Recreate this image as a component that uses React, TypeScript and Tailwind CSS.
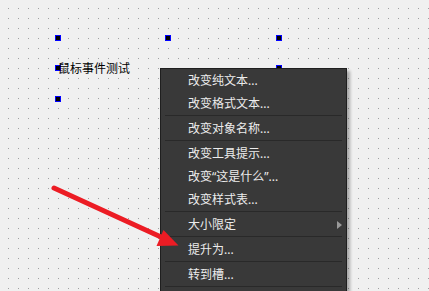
const items: { label?: string; sep?: boolean; sub?: boolean }[] = [
  { label: '改变纯文本...' },
  { label: '改变格式文本...' },
  { sep: true },
  { label: '改变对象名称...' },
  { sep: true },
  { label: '改变工具提示...' },
  { label: '改变“这是什么”...' },
  { label: '改变样式表...' },
  { sep: true },
  { label: '大小限定', sub: true },
  { sep: true },
  { label: '提升为...' },
  { sep: true },
  { label: '转到槽...' },
  { sep: true },
  { label: '' },
]

const handles = [
  [55, 35], [165, 35], [276, 35],
  [55, 65], [276, 65],
  [55, 96], [165, 96], [276, 96],
]

function Handle({ x, y }: { x: number; y: number }) {
  return (
    <div
      className="absolute w-[6px] h-[6px] border border-[#0000ff] bg-black"
      style={{ left: x, top: y }}
    />
  )
}

function ContextMenu() {
  return (
    <div className="absolute left-[160px] top-[68px] w-[187px] border border-[#1f1f1f] bg-[#393939] shadow-[3px_3px_3px_rgba(0,0,0,0.3)]">
      {items.map((it, i) =>
        it.sep ? (
          <div key={i} className="h-[2px]">
            <div className="mx-[4px] h-px bg-[#292929]" />
          </div>
        ) : (
          <div key={i} className="relative h-[23px] flex items-center pl-[27px] text-[12px] leading-none text-[#ececec]">
            {it.label}
            {it.sub && (
              <svg className="absolute left-[176px] top-[8px]" width="6" height="8" viewBox="0 0 6 8">
                <path d="M0 0 L5 4 L0 8 Z" fill="#9a9a9a" />
              </svg>
            )}
          </div>
        ),
      )}
    </div>
  )
}

export default function App() {
  return (
    <div
      className="relative w-[429px] h-[291px] overflow-hidden bg-[#f0f0f0]"
      style={{ fontFamily: '"Noto Sans", "Noto Sans CJK SC", sans-serif' }}
    >
      <svg className="absolute inset-0" width="429" height="291">
        <defs>
          <pattern id="grid" width="10" height="10" patternUnits="userSpaceOnUse">
            <rect x="8" y="8" width="1" height="1" fill="#a0a0a0" />
          </pattern>
        </defs>
        <rect width="429" height="291" fill="url(#grid)" />
      </svg>

      {handles.map(([x, y]) => (
        <Handle key={`${x}-${y}`} x={x} y={y} />
      ))}
      <div className="absolute left-[58px] top-[61px] text-[12px] leading-[15px] text-black">鼠标事件测试</div>

      <ContextMenu />

      <svg className="absolute inset-0 pointer-events-none" width="429" height="291">
        <line x1="54" y1="188" x2="161" y2="237" stroke="#ec1c24" strokeWidth="5" strokeLinecap="round" />
        <polygon points="156.5,246 163.5,230 178.5,245.5" fill="#ec1c24" />
      </svg>
    </div>
  )
}
